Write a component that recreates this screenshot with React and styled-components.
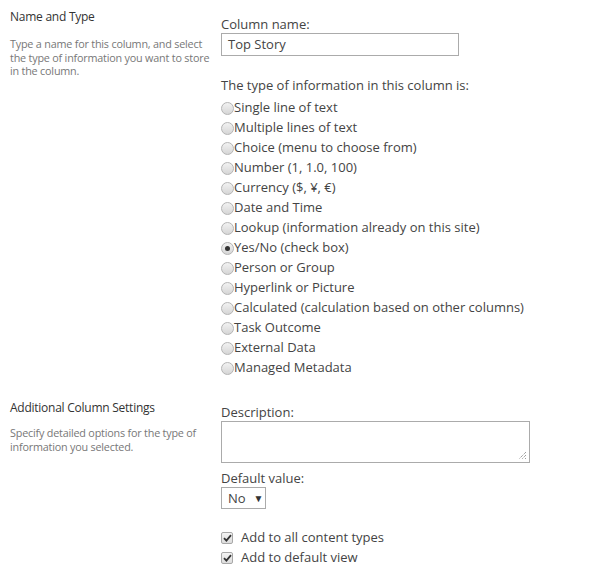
import React from "react";
import styled, { createGlobalStyle } from "styled-components";

const Global = createGlobalStyle`
  html, body { margin: 0; padding: 0; background: #fff; }
  body { font-family: "Open Sans", "Liberation Sans", sans-serif; color: #444; }
`;

const Page = styled.div`
  padding-left: 10px;
  width: 595px;
`;

const Section = styled.section`
  display: grid;
  grid-template-columns: 211px 1fr;
  padding: ${(p) => (p.$first ? 8 : 10)}px 0 12px;
`;

const Side = styled.div`
  display: flex;
  flex-direction: column;
`;

const SideTitle = styled.h3`
  margin: 0;
  font-weight: 400;
  font-size: 12px;
  line-height: 18px;
  letter-spacing: -0.25px;
  color: #333;
`;

const SideText = styled.p`
  margin: ${(p) => p.$gap ?? 11}px 0 0;
  font-size: 10.8px;
  line-height: 13.6px;
  letter-spacing: -0.2px;
  color: #777;
  white-space: nowrap;
`;

const Main = styled.div`
  display: flex;
  flex-direction: column;
  padding-top: ${(p) => p.$pad}px;
`;

const FieldLabel = styled.div`
  font-size: 13px;
  line-height: 18px;
  color: #444;
  margin-top: ${(p) => p.$top || 0}px;
`;

const TextInput = styled.div`
  box-sizing: border-box;
  width: 238px;
  height: 23px;
  border: 1px solid #ababab;
  padding: 0 6px;
  font-size: 13px;
  line-height: 21px;
  color: #444;
`;

const TypeLabel = styled.div`
  margin-top: 19px;
  margin-bottom: 2px;
  font-size: 13px;
  line-height: 20px;
  color: #444;
`;

const OptionList = styled.div`
  display: flex;
  flex-direction: column;
`;

const Option = styled.label`
  display: flex;
  align-items: flex-start;
  font-size: 13px;
  line-height: 20px;
  color: #444;
  white-space: nowrap;
`;

const Radio = styled.span`
  box-sizing: border-box;
  width: 13px;
  height: 13px;
  margin-top: 5px;
  border-radius: 50%;
  border: 1px solid #b4b4b4;
  background: linear-gradient(#f2f2f2, #d6d6d6);
  display: flex;
  align-items: center;
  justify-content: center;
  flex: none;
  &::after {
    content: "";
    width: 5px;
    height: 5px;
    border-radius: 50%;
    background: ${(p) => (p.$checked ? "#333" : "transparent")};
  }
`;

const TextArea = styled.div`
  box-sizing: border-box;
  width: 309px;
  height: 42px;
  border: 1px solid #ababab;
  position: relative;
`;

const Grip = styled.svg`
  position: absolute;
  right: 2px;
  bottom: 2px;
`;

const Select = styled.div`
  box-sizing: border-box;
  margin-top: 0;
  width: 45px;
  height: 22px;
  border: 1px solid #ababab;
  display: flex;
  align-items: center;
  padding-left: 6px;
  font-size: 13px;
  color: #444;
`;

const Arrow = styled.span`
  font-size: 10px;
  margin-left: 8px;
  color: #333;
`;

const CheckList = styled.div`
  margin-top: 18px;
  display: flex;
  flex-direction: column;
`;

const CheckRow = styled.label`
  display: flex;
  align-items: flex-start;
  font-size: 13px;
  line-height: 20px;
  color: #444;
`;

const Box = styled.span`
  box-sizing: border-box;
  width: 12px;
  height: 12px;
  margin-top: 5px;
  margin-right: 8px;
  border: 1px solid #a8a8a8;
  border-radius: 2px;
  background: linear-gradient(#f4f4f4, #dcdcdc);
  display: flex;
  align-items: center;
  justify-content: center;
  flex: none;
`;

const types = [
  "Single line of text",
  "Multiple lines of text",
  "Choice (menu to choose from)",
  "Number (1, 1.0, 100)",
  "Currency ($, ¥, €)",
  "Date and Time",
  "Lookup (information already on this site)",
  "Yes/No (check box)",
  "Person or Group",
  "Hyperlink or Picture",
  "Calculated (calculation based on other columns)",
  "Task Outcome",
  "External Data",
  "Managed Metadata",
];

const Check = () => (
  <svg width="9" height="8" viewBox="0 0 9 8">
    <path d="M1 4.2 L3.4 6.6 L8 1.2" fill="none" stroke="#333" strokeWidth="1.8" />
  </svg>
);

export default function App() {
  return (
    <Page>
      <Global />
      <Section $first>
        <Side>
          <SideTitle>Name and Type</SideTitle>
          <SideText>
            Type a name for this column, and select
            <br />
            the type of information you want to store
            <br />
            in the column.
          </SideText>
        </Side>
        <Main $pad={7}>
          <FieldLabel>Column name:</FieldLabel>
          <TextInput>Top Story</TextInput>
          <TypeLabel>The type of information in this column is:</TypeLabel>
          <OptionList>
            {types.map((t) => (
              <Option key={t}>
                <Radio $checked={t === "Yes/No (check box)"} />
                {t}
              </Option>
            ))}
          </OptionList>
        </Main>
      </Section>
      <Section>
        <Side>
          <SideTitle>Additional Column Settings</SideTitle>
          <SideText $gap={9}>
            Specify detailed options for the type of
            <br />
            information you selected.
          </SideText>
        </Side>
        <Main $pad={4}>
          <FieldLabel>Description:</FieldLabel>
          <TextArea>
            <Grip width="9" height="9" viewBox="0 0 9 9">
              <path d="M8 1 L1 8 M8 4 L4 8 M8 7 L7 8" stroke="#777" strokeWidth="1" strokeDasharray="1 1" />
            </Grip>
          </TextArea>
          <FieldLabel $top={6}>Default value:</FieldLabel>
          <Select>
            No<Arrow>▼</Arrow>
          </Select>
          <CheckList>
            <CheckRow>
              <Box><Check /></Box>
              Add to all content types
            </CheckRow>
            <CheckRow>
              <Box><Check /></Box>
              Add to default view
            </CheckRow>
          </CheckList>
        </Main>
      </Section>
    </Page>
  );
}
